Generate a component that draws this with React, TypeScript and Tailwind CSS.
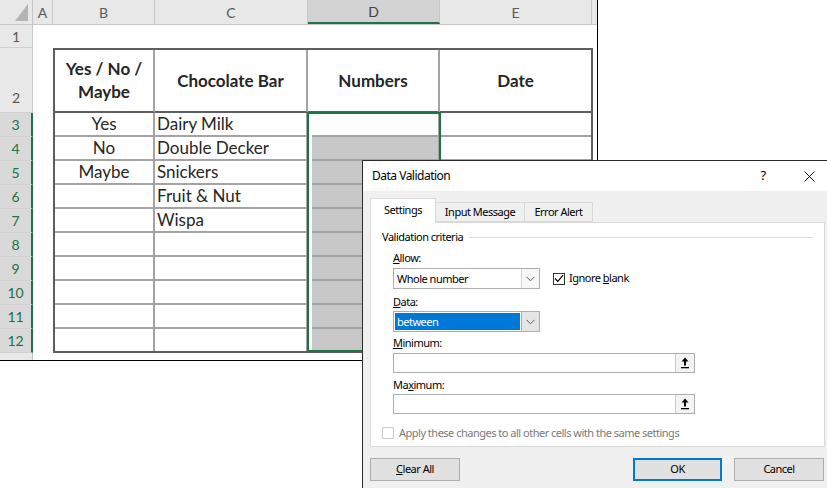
import React from 'react';

// column header strip of the sheet
const cols = [
  { label: 'A', w: 'w-[20px]', sel: false },
  { label: 'B', w: 'w-[102px]', sel: false },
  { label: 'C', w: 'w-[153px]', sel: false },
  { label: 'D', w: 'w-[132px]', sel: true },
  { label: 'E', w: 'w-[152px]', sel: false },
];

const rowHeads = [
  { n: '1', h: 'h-[23px]', sel: false, align: 'items-center' },
  { n: '2', h: 'h-[65px]', sel: false, align: 'items-end pb-[4px]' },
  ...[3, 4, 5, 6, 7, 8, 9, 10, 11, 12].map((n) => ({ n: String(n), h: 'h-[24px]', sel: true, align: 'items-center' })),
  { n: '', h: 'h-[24px]', sel: false, align: 'items-start' },
];

const data: [string, string][] = [
  ['Yes', 'Dairy Milk'],
  ['No', 'Double Decker'],
  ['Maybe', 'Snickers'],
  ['', 'Fruit & Nut'],
  ['', 'Wispa'],
  ['', ''],
  ['', ''],
  ['', ''],
  ['', ''],
  ['', ''],
];

const Sheet = () => (
  <div className="w-[598px] h-[361px] border-r border-b border-black bg-white overflow-hidden font-['Lato','Noto_Sans',sans-serif] text-[#262626]">
    {/* column headers */}
    <div className="flex h-[25px] bg-[#e8e8e8] border-b border-[#c6c6c6]">
      <div className="w-[33px] shrink-0 border-r border-[#c6c6c6] flex items-end justify-end pr-[4px] pb-[3px]">
        <svg width="13" height="17" viewBox="0 0 13 17">
          <polygon points="13,0 13,17 0,17" fill="#b4b4b4" />
        </svg>
      </div>
      {cols.map((c) => (
        <div
          key={c.label}
          className={`${c.w} shrink-0 border-r border-[#c6c6c6] flex items-center justify-center text-[14px] ${
            c.sel ? 'bg-[#d2d2d2] border-b-2 border-b-[#217346] text-[#404040]' : 'text-[#595959]'
          }`}
        >
          {c.label}
        </div>
      ))}
      <div className="flex-1" />
    </div>

    <div className="flex">
      {/* row headers */}
      <div className="w-[33px] shrink-0 flex flex-col">
        {rowHeads.map((r, i) => (
          <div
            key={i}
            className={`${r.h} shrink-0 flex justify-center ${r.align} border-b border-[#d0d0d0] text-[14px] ${
              r.sel
                ? 'bg-[#d9d9d9] text-[#217346] border-r-2 border-r-[#217346]'
                : 'bg-[#e8e8e8] text-[#595959] border-r border-r-[#c6c6c6]'
            }`}
          >
            {r.n}
          </div>
        ))}
      </div>

      {/* cells */}
      <div className="flex flex-col">
        <div className="h-[23px]" />
        <div className="ml-[20px] relative grid grid-cols-[100px_153px_132px_151px] grid-rows-[63px_repeat(9,24px)_22px] border-2 border-[#5e5e5e] text-[17px]">
          <div className="border-r-2 border-b-2 border-r-[#a3a3a3] border-b-[#5e5e5e] flex flex-col items-center justify-center font-bold leading-[23px] pb-[2px]">
            <span>Yes / No /</span>
            <span>Maybe</span>
          </div>
          <div className="border-r-2 border-b-2 border-r-[#a3a3a3] border-b-[#5e5e5e] flex items-center justify-center font-bold">
            Chocolate Bar
          </div>
          <div className="border-r-2 border-b-2 border-r-[#a3a3a3] border-b-[#5e5e5e] flex items-center justify-center font-bold">
            Numbers
          </div>
          <div className="border-b-2 border-b-[#5e5e5e] flex items-center justify-center font-bold">Date</div>

          {data.map(([yn, bar], i) => {
            const last = i === data.length - 1;
            return (
              <React.Fragment key={i}>
                <div className={`border-r-2 border-[#a3a3a3] flex items-center justify-center ${last ? '' : 'border-b-2'}`}>
                  {yn}
                </div>
                <div className={`border-r-2 border-[#a3a3a3] flex items-center pl-[2px] ${last ? '' : 'border-b-2'}`}>
                  {bar}
                </div>
                <div className={`border-r-2 border-[#a3a3a3] ${i > 0 ? 'bg-[#c8c8c8]' : ''} ${last ? '' : 'border-b-2'}`} />
                <div className={`border-[#a3a3a3] ${last ? '' : 'border-b-2'}`} />
              </React.Fragment>
            );
          })}

          {/* selection outline D3:D12 */}
          <div className="absolute left-[252px] top-[62px] w-[134px] h-[240px] border-2 border-[#217346] shadow-[inset_3px_0_0_#ffffff] pointer-events-none" />
        </div>
      </div>
    </div>
  </div>
);

const Chevron = () => (
  <svg width="9" height="6" viewBox="0 0 9 6" className="text-[#606060]">
    <path d="M0.5 0.8 L4.5 4.8 L8.5 0.8" fill="none" stroke="currentColor" strokeWidth="1" />
  </svg>
);

const CollapseIcon = () => (
  <svg width="8" height="12" viewBox="0 0 8 12">
    <path d="M4 0.5 L7.5 4.5 L5 4.5 L5 8.5 L3 8.5 L3 4.5 L0.5 4.5 Z" fill="#000" />
    <rect x="0" y="10" width="8" height="1.3" fill="#000" />
  </svg>
);

const RefInput = () => (
  <div className="w-[302px] h-[20px] border border-[#abadb3] bg-white flex justify-end">
    <div className="w-[19px] h-full border-l border-[#c8c8c8] bg-[#f3f3f3] flex items-center justify-center">
      <CollapseIcon />
    </div>
  </div>
);

const Dialog = () => (
  <div className="absolute left-[362px] top-[160px] w-[471px] h-[340px] border border-[#2b2b2b] bg-[#f0f0f0] font-['Noto_Sans','Open_Sans',sans-serif] text-[11px] tracking-[-0.5px] text-black">
    {/* title bar */}
    <div className="h-[30px] bg-white flex items-center">
      <span className="pl-[9px] text-[12px]">Data Validation</span>
      <div className="ml-auto flex h-full">
        <div className="w-[46px] flex items-center justify-center text-[13px]">?</div>
        <div className="w-[46px] flex items-center justify-center">
          <svg width="11" height="11" viewBox="0 0 11 11">
            <path d="M0.5 0.5 L10.5 10.5 M10.5 0.5 L0.5 10.5" stroke="#111" strokeWidth="1" />
          </svg>
        </div>
      </div>
    </div>

    <div className="px-[7px]">
      {/* tabs */}
      <div className="flex items-end h-[31px] relative z-10">
        <div className="h-[25px] w-[66px] bg-white border border-b-0 border-[#d9d9d9] flex items-center justify-center -mb-px pb-[2px]">
          Settings
        </div>
        <div className="h-[20px] w-[89px] border border-l-0 border-[#d9d9d9] flex items-center justify-center">
          Input Message
        </div>
        <div className="h-[20px] w-[68px] border border-l-0 border-[#d9d9d9] flex items-center justify-center">
          Error Alert
        </div>
      </div>

      {/* panel */}
      <div className="h-[225px] bg-white border border-[#d9d9d9] pt-[6px]">
        <div className="flex items-center pl-[11px] pr-[11px] h-[16px]">
          <span>Validation criteria</span>
          <div className="flex-1 ml-[6px] h-px bg-[#dcdcdc]" />
        </div>

        <div className="pl-[22px]">
          <div className="mt-[5px] h-[16px] leading-[16px]">
            <span className="underline">A</span>llow:
          </div>
          <div className="mt-[2px] flex items-center">
            <div className="w-[147px] h-[21px] border border-[#abadb3] bg-white flex">
              <span className="flex-1 pl-[3px] leading-[19px]">Whole number</span>
              <div className="w-[18px] border-l border-[#d6d6d6] bg-[#f7f7f7] flex items-center justify-center">
                <Chevron />
              </div>
            </div>
            <div className="ml-[13px] w-[12px] h-[12px] border border-[#333] bg-white flex items-center justify-center">
              <svg width="10" height="9" viewBox="0 0 10 9">
                <path d="M1 4.5 L3.8 7.3 L9 1.2" fill="none" stroke="#000" strokeWidth="1.2" />
              </svg>
            </div>
            <span className="ml-[4px]">
              Ignore <span className="underline">b</span>lank
            </span>
          </div>

          <div className="mt-[5px] h-[16px] leading-[16px]">
            <span className="underline">D</span>ata:
          </div>
          <div className="mt-[1px] w-[147px] h-[21px] border border-[#abadb3] bg-white flex">
            <div className="flex-1 p-px">
              <div className="h-full bg-[#0078d7] text-white pl-[2px] leading-[17px]">between</div>
            </div>
            <div className="w-[18px] border-l border-[#adadad] bg-[#e5e5e5] flex items-center justify-center">
              <Chevron />
            </div>
          </div>

          <div className="mt-[3px] h-[16px] leading-[16px]">
            <span className="underline">M</span>inimum:
          </div>
          <div className="mt-[2px]">
            <RefInput />
          </div>

          <div className="mt-[4px] h-[16px] leading-[16px]">
            Ma<span className="underline">x</span>imum:
          </div>
          <div className="mt-px">
            <RefInput />
          </div>
        </div>

        <div className="mt-[11px] pl-[11px] flex items-center text-[#7a7a7a]">
          <div className="w-[12px] h-[12px] border border-[#cccccc] bg-white" />
          <span className="ml-[5px]">Apply these changes to all other cells with the same settings</span>
        </div>
      </div>

      {/* buttons */}
      <div className="mt-[11px] flex items-center pr-[1px]">
        <div className="w-[90px] h-[23px] border border-[#adadad] bg-[#e1e1e1] flex items-center justify-center">
          <span>
            <span className="underline">C</span>lear All
          </span>
        </div>
        <div className="ml-auto w-[89px] h-[23px] border-2 border-[#0078d7] bg-[#e1e1e1] flex items-center justify-center">
          OK
        </div>
        <div className="ml-[12px] w-[90px] h-[23px] border border-[#adadad] bg-[#e1e1e1] flex items-center justify-center">
          Cancel
        </div>
      </div>
    </div>
  </div>
);

export default function App() {
  return (
    <div className="relative w-[827px] h-[488px] bg-white overflow-hidden">
      <Sheet />
      <Dialog />
    </div>
  );
}
